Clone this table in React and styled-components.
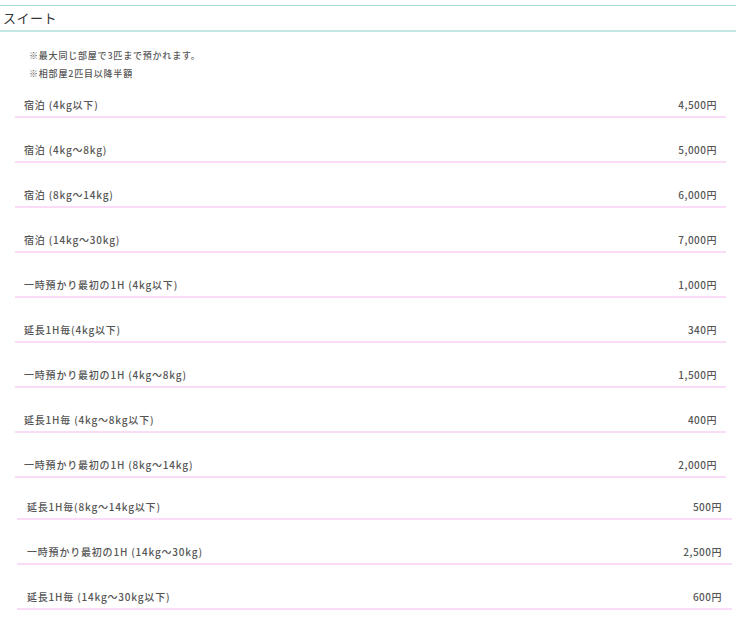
import React from "react";
import styled, { createGlobalStyle } from "styled-components";

const GlobalStyle = createGlobalStyle`
  body {
    margin: 0;
    background: #fff;
    font-family: "Noto Sans CJK JP", "Noto Sans", sans-serif;
    color: #555;
  }
`;

const mainPrices = [
  { label: "宿泊 (4kg以下)", price: "4,500円" },
  { label: "宿泊 (4kg〜8kg)", price: "5,000円" },
  { label: "宿泊 (8kg〜14kg)", price: "6,000円" },
  { label: "宿泊 (14kg〜30kg)", price: "7,000円" },
  { label: "一時預かり最初の1H (4kg以下)", price: "1,000円" },
  { label: "延長1H毎(4kg以下)", price: "340円" },
  { label: "一時預かり最初の1H (4kg〜8kg)", price: "1,500円" },
  { label: "延長1H毎 (4kg〜8kg以下)", price: "400円" },
  { label: "一時預かり最初の1H (8kg〜14kg)", price: "2,000円" },
];

const extraPrices = [
  { label: "延長1H毎(8kg〜14kg以下)", price: "500円" },
  { label: "一時預かり最初の1H (14kg〜30kg)", price: "2,500円" },
  { label: "延長1H毎 (14kg〜30kg以下)", price: "600円" },
];

const App = () => {
  return (
    <>
      <GlobalStyle />
      <Page>
        <SectionTitle>スイート</SectionTitle>
        <Notes>
          <li>※最大同じ部屋で3匹まで預かれます。</li>
          <li>※相部屋2匹目以降半額</li>
        </Notes>
        <PriceList>
          {mainPrices.map((item) => (
            <Row key={item.label}>
              <Label>{item.label}</Label>
              <Price>{item.price}</Price>
            </Row>
          ))}
        </PriceList>
        <PriceList $shifted>
          {extraPrices.map((item) => (
            <Row key={item.label} $shifted>
              <Label>{item.label}</Label>
              <Price>{item.price}</Price>
            </Row>
          ))}
        </PriceList>
      </Page>
    </>
  );
};

const Page = styled.div`
  width: 736px;
  padding-top: 5px;
`;

const SectionTitle = styled.h2`
  margin: 0;
  padding: 0 3px;
  height: 24px;
  line-height: 24px;
  font-size: 13px;
  font-weight: 400;
  letter-spacing: 0.5px;
  color: #333;
  border-top: 1px solid #acdeda;
  border-bottom: 2px solid #c6e6e4;
`;

const Notes = styled.ul`
  list-style: none;
  margin: 15px 0 0;
  padding: 0 0 0 29px;

  li {
    font-size: 9px;
    line-height: 18px;
    letter-spacing: 0.8px;
    font-weight: 500;
    color: #555;
  }
`;

const PriceList = styled.div`
  display: flex;
  flex-direction: column;
  gap: 25px;
  margin-top: ${(props) => (props.$shifted ? "22px" : "15px")};
  margin-left: ${(props) => (props.$shifted ? "17px" : "15px")};
  width: ${(props) => (props.$shifted ? "715px" : "711px")};
`;

const Row = styled.div`
  display: flex;
  justify-content: space-between;
  align-items: center;
  padding: 0 ${(props) => (props.$shifted ? "10px" : "9px")} 4px;
  line-height: 14px;
  border-bottom: 2px solid #fadcf8;
`;

const Label = styled.span`
  font-size: 10px;
  letter-spacing: 0.8px;
  font-weight: 500;
  color: #555;
`;

const Price = styled.span`
  font-size: 10px;
  letter-spacing: 0.5px;
  font-weight: 500;
  color: #555;
`;

export default App;
